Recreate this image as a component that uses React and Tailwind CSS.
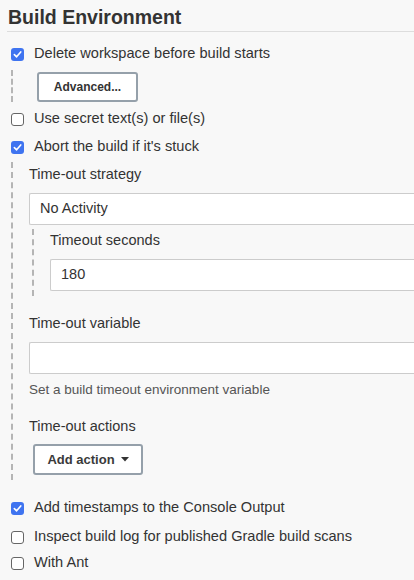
import React from 'react';

const CheckRow = ({ label, checked, className = '' }) => (
  <label className={`flex items-center h-[20px] ${className}`}>
    <span
      className={`ml-[4px] w-[13px] h-[13px] rounded-[3px] flex items-center justify-center shrink-0 ${
        checked ? 'bg-[#3f74f0]' : 'bg-white border border-[#666]'
      }`}
    >
      {checked && (
        <svg width="9" height="9" viewBox="0 0 10 10" fill="none">
          <path d="M1.5 5.2 L4 7.6 L8.6 2.2" stroke="white" strokeWidth="1.8" strokeLinecap="round" strokeLinejoin="round" />
        </svg>
      )}
    </span>
    <span className="ml-[10px] text-[14.6px] text-[#333]">{label}</span>
  </label>
);

const TextBox = ({ value }) => (
  <div className="h-[32px] bg-white border border-[#cccccc] border-r-0 rounded-l-[2px] flex items-center pl-[10px] text-[14.5px] text-[#333] -mr-[10px]">
    {value}
  </div>
);

const App = () => {
  return (
    <div className="h-[580px] overflow-hidden bg-[#f8f8f8] pl-[7px] font-['Liberation_Sans',Arial,sans-serif] text-[#333]">
      <h2 className="h-[32px] pl-[1px] pt-[5px] border-b border-[#dddddd] text-[19.5px] font-bold leading-[24px] text-[#333]">
        Build Environment
      </h2>

      <CheckRow className="mt-[12px]" label="Delete workspace before build starts" checked />
      <div className="mt-[6px] ml-[4px] border-l-2 border-dashed border-[#b5b5b5] pl-[24px] pt-[2px]">
        <button className="w-[101px] h-[30px] bg-white border-2 border-[#95a0aa] rounded-[3px] text-[12px] font-bold text-[#333]">
          Advanced...
        </button>
      </div>

      <CheckRow className="mt-[7px]" label="Use secret text(s) or file(s)" />
      <CheckRow className="mt-[8px]" label="Abort the build if it's stuck" checked />

      <div className="mt-[5px] ml-[4px] border-l-2 border-dashed border-[#b5b5b5] pl-[16px] pb-[5px] pt-[3px]">
        <div className="h-[20px] flex items-center text-[14.5px]">Time-out strategy</div>
        <div className="mt-[8px]">
          <TextBox value="No Activity" />
        </div>

        <div className="mt-[4px] ml-[3px] border-l-2 border-dashed border-[#b5b5b5] pl-[16px] pt-[2px] pb-[5px]">
          <div className="h-[20px] flex items-center text-[14.5px]">Timeout seconds</div>
          <div className="mt-[8px]">
            <TextBox value="180" />
          </div>
        </div>

        <div className="mt-[18px] h-[20px] flex items-center text-[14.5px]">Time-out variable</div>
        <div className="mt-[8px]">
          <TextBox value="" />
        </div>
        <div className="mt-[6px] h-[20px] flex items-center text-[13.5px] text-[#555]">
          Set a build timeout environment variable
        </div>

        <div className="mt-[17px] h-[20px] flex items-center text-[14.5px]">Time-out actions</div>
        <div className="mt-[7px] pl-[4px]">
          <button className="w-[110px] h-[31px] bg-white border-2 border-[#95a0aa] rounded-[3px] flex items-center justify-center gap-[6px] text-[13px] font-bold text-[#3a3a3a]">
            Add action
            <svg width="8" height="5" viewBox="0 0 8 5">
              <path d="M0 0 H8 L4 4.5 Z" fill="#333" />
            </svg>
          </button>
        </div>
      </div>

      <CheckRow className="mt-[18px]" label="Add timestamps to the Console Output" checked />
      <CheckRow className="mt-[9px]" label="Inspect build log for published Gradle build scans" />
      <CheckRow className="mt-[6px]" label="With Ant" />
    </div>
  );
};

export default App;
